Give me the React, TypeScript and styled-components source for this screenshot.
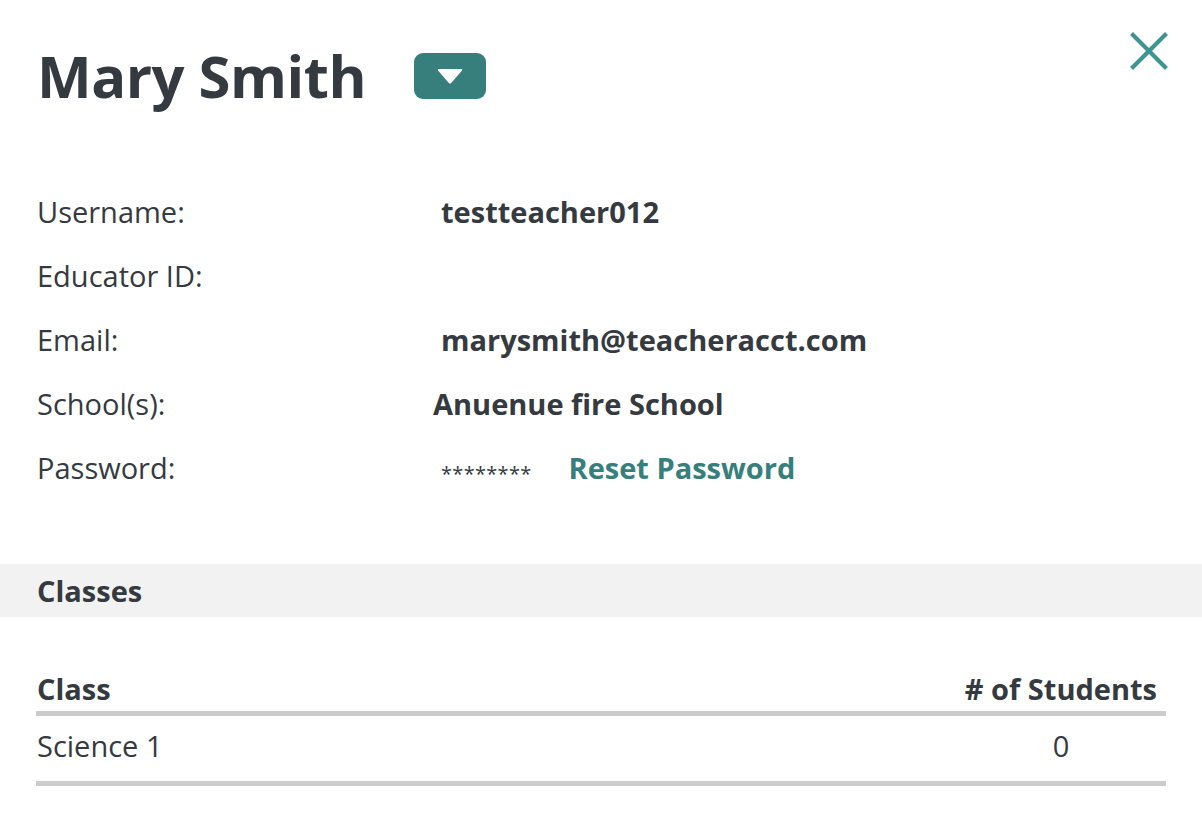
import React from 'react';
import styled, { createGlobalStyle } from 'styled-components';

const GlobalStyle = createGlobalStyle`
    html, body {
        margin: 0;
        padding: 0;
        background: #ffffff;
    }
    body {
        font-family: "Open Sans", Lato, sans-serif;
        color: #343a40;
    }
`;

const Page = styled.div`
    width: 1202px;
    height: 822px;
    overflow: hidden;
    background: #ffffff;
`;

const Header = styled.div`
    display: flex;
    align-items: flex-start;
    justify-content: space-between;
    padding: 40px 34px 0 37px;
`;

const TitleGroup = styled.div`
    display: flex;
    align-items: center;
    gap: 48px;
`;

const Title = styled.h1`
    margin: 0;
    font-size: 58px;
    font-weight: 700;
    line-height: 72px;
    letter-spacing: -0.5px;
`;

const MenuButton = styled.button`
    width: 72px;
    height: 46px;
    border: none;
    border-radius: 9px;
    background: #367f7c;
    display: flex;
    align-items: center;
    justify-content: center;
    padding: 0;
    cursor: pointer;
`;

const CloseButton = styled.button`
    border: none;
    background: transparent;
    padding: 0;
    margin-top: -8px;
    cursor: pointer;
`;

const Details = styled.div`
    display: grid;
    grid-template-columns: 396px 1fr;
    grid-auto-rows: 64px;
    padding: 68px 37px 0 37px;
`;

const Label = styled.div`
    font-size: 29px;
    line-height: 64px;
    font-weight: 400;
`;

const Value = styled.div<{ $shift?: number }>`
    font-size: 29px;
    line-height: 64px;
    font-weight: 700;
    margin-left: ${(p) => p.$shift ?? 8}px;
    display: flex;
    align-items: center;
    gap: 37px;
`;

const Masked = styled.span`
    font-size: 20px;
    font-weight: 400;
    letter-spacing: 0.3px;
    margin-top: 12px;
`;

const ResetLink = styled.a`
    color: #367f7c;
    font-weight: 700;
    text-decoration: none;
    cursor: pointer;
`;

const SectionBar = styled.div`
    margin-top: 64px;
    height: 53px;
    background: #f2f2f2;
    display: flex;
    align-items: center;
    padding: 0 37px;
    font-size: 29px;
    font-weight: 700;
`;

const Table = styled.table`
    margin: 54px 36px 0 36px;
    width: calc(100% - 72px);
    border-collapse: collapse;
`;

const HeadCell = styled.th<{ $right?: boolean }>`
    font-size: 29px;
    font-weight: 700;
    text-align: ${(p) => (p.$right ? 'right' : 'left')};
    width: ${(p) => (p.$right ? '1%' : 'auto')};
    white-space: nowrap;
    padding: 0 ${(p) => (p.$right ? '9px' : '1px')} 4px 1px;
    border-bottom: 5px solid #cccccc;
    line-height: 36px;
`;

const Cell = styled.td<{ $center?: boolean }>`
    font-size: 29px;
    font-weight: 400;
    text-align: ${(p) => (p.$center ? 'center' : 'left')};
    padding: 10px ${(p) => (p.$center ? '9px' : '1px')} 15px 1px;
    border-bottom: 5px solid #cccccc;
    line-height: 40px;
`;

const details = [
    { label: 'Username:', value: 'testteacher012', shift: 8 },
    { label: 'Educator ID:', value: '', shift: 8 },
    { label: 'Email:', value: 'marysmith@teacheracct.com', shift: 8 },
    { label: 'School(s):', value: 'Anuenue fire School', shift: 0 },
];

const App = () => (
    <Page>
        <GlobalStyle />
        <Header>
            <TitleGroup>
                <Title>Mary Smith</Title>
                <MenuButton aria-label="Open menu">
                    <svg width="26" height="15" viewBox="0 0 26 15">
                        <path d="M1 1.5 Q0 0 2 0 L24 0 Q26 0 25 1.5 L14.2 14 Q13 15 11.8 14 Z" fill="#ffffff" />
                    </svg>
                </MenuButton>
            </TitleGroup>
            <CloseButton aria-label="Close">
                <svg width="38" height="38" viewBox="0 0 38 38">
                    <path d="M3 3 L35 35 M35 3 L3 35" stroke="#3d9593" strokeWidth="4.2" strokeLinecap="square" />
                </svg>
            </CloseButton>
        </Header>
        <Details>
            {details.map((d) => (
                <React.Fragment key={d.label}>
                    <Label>{d.label}</Label>
                    <Value $shift={d.shift}>{d.value}</Value>
                </React.Fragment>
            ))}
            <Label>Password:</Label>
            <Value>
                <Masked>********</Masked>
                <ResetLink>Reset Password</ResetLink>
            </Value>
        </Details>
        <SectionBar>Classes</SectionBar>
        <Table>
            <thead>
                <tr>
                    <HeadCell>Class</HeadCell>
                    <HeadCell $right>
                        # of Students
                    </HeadCell>
                </tr>
            </thead>
            <tbody>
                <tr>
                    <Cell>Science 1</Cell>
                    <Cell $center>0</Cell>
                </tr>
            </tbody>
        </Table>
    </Page>
);

export default App;
